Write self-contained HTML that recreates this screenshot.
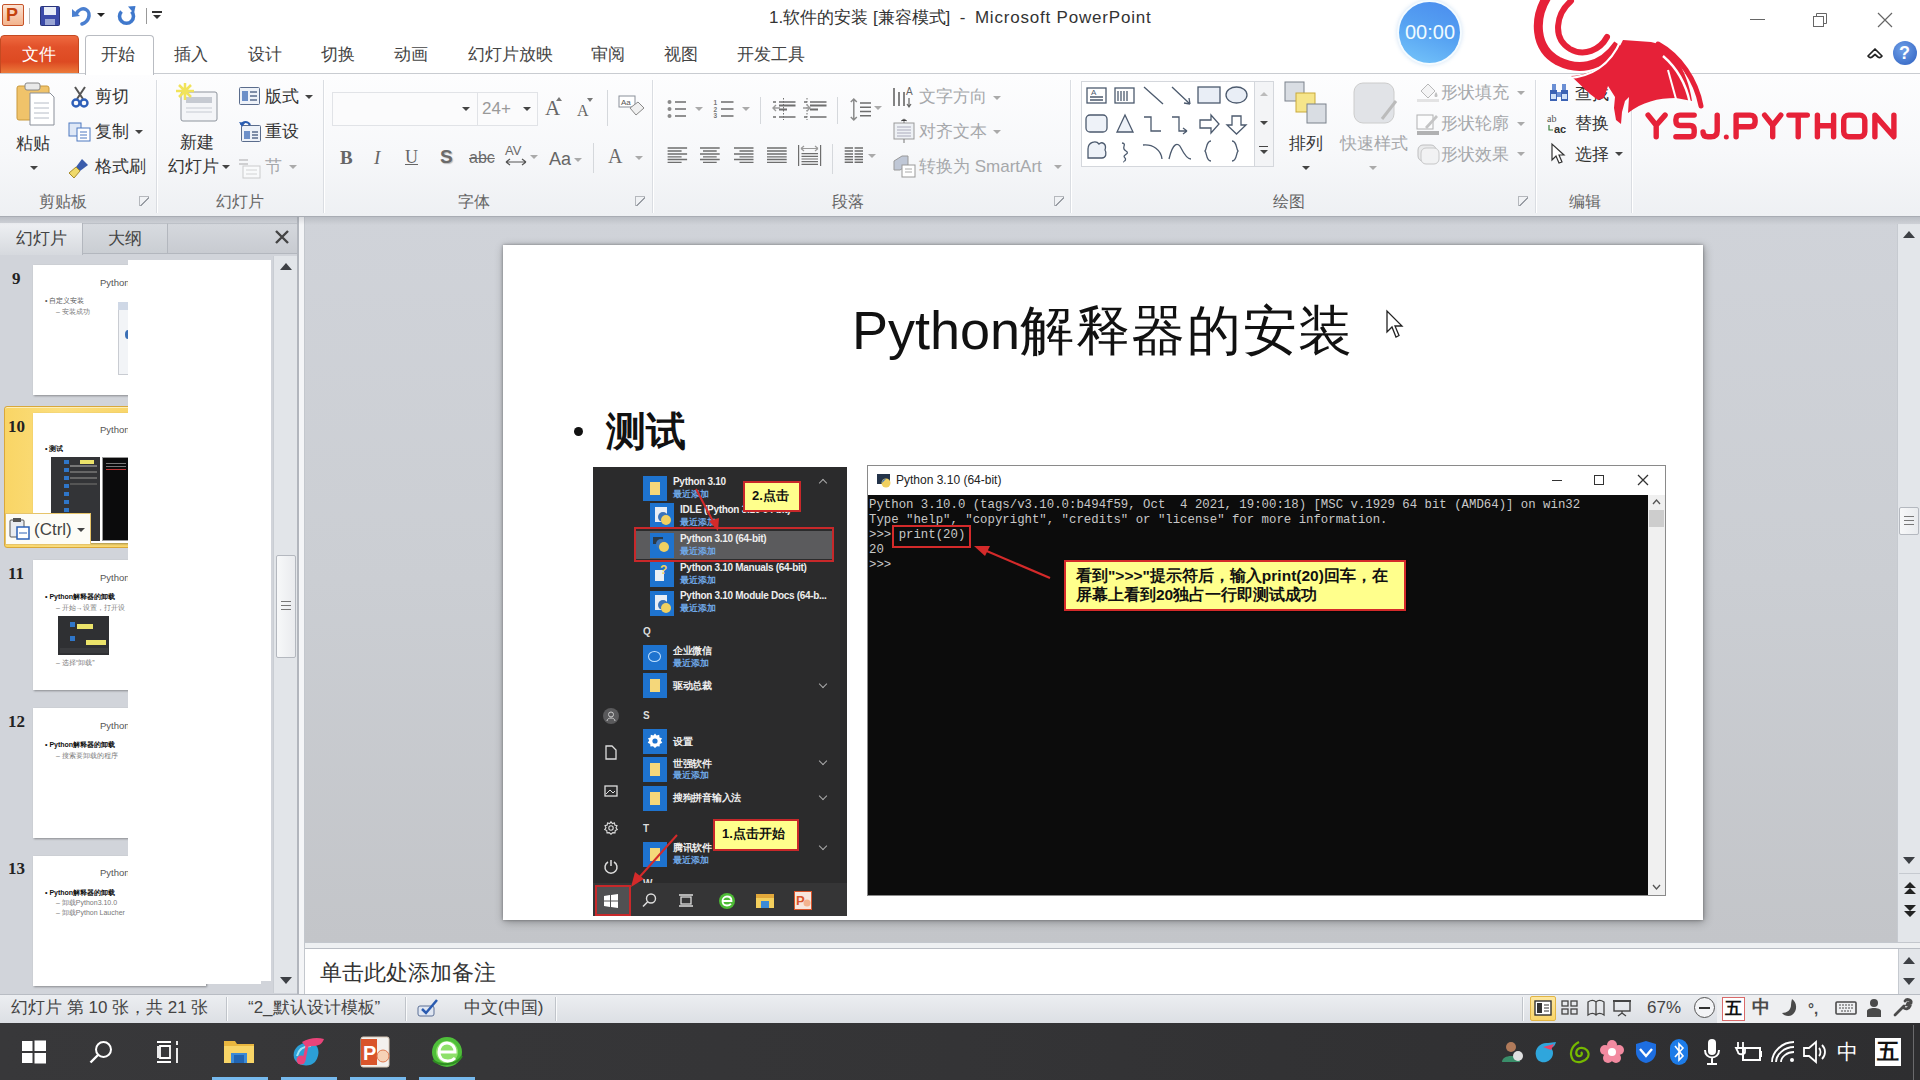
<!DOCTYPE html>
<html><head><meta charset="utf-8">
<style>
*{margin:0;padding:0;box-sizing:border-box}
html,body{width:1920px;height:1080px;overflow:hidden;background:#fff;font-family:"Liberation Sans",sans-serif;color:#333}
.a{position:absolute}
svg{position:absolute;overflow:visible}
#ribbon{left:0;top:73px;width:1920px;height:145px;background:linear-gradient(#fdfdfe,#f7f8fa 55%,#eef0f3);border-top:1px solid #c9ccd1;border-bottom:2px solid #a8acb3}
#leftpanel{left:0;top:217px;width:300px;height:777px;background:#d1d4da}
#main{left:305px;top:217px;width:1615px;height:726px;background:linear-gradient(#d0d3d9,#cbced3 50%,#c3c5c9)}
#status{left:0;top:994px;width:1920px;height:29px;background:linear-gradient(#eceef1,#dcdfe4);border-top:1px solid #b8bcc3}
#taskbar{left:0;top:1023px;width:1920px;height:57px;background:linear-gradient(90deg,#38383a,#343436 50%,#2e2e30)}
.t{position:absolute;white-space:nowrap;line-height:1}
.tab{top:46px;z-index:3;font-size:17px;color:#444}
.lbl{top:194px;font-size:16px;color:#666}
.rt{font-size:17px;color:#333}
.gr{color:#a6a8ab}
.sep{position:absolute;top:80px;width:2px;height:133px;background:linear-gradient(90deg,#dadde2 50%,#fff 50%)}
.dd{position:absolute;width:0;height:0;border-left:4px solid transparent;border-right:4px solid transparent;border-top:4px solid #444}
.ddg{border-top-color:#aaa}
.launch{position:absolute;width:10px;height:10px;border-left:1px solid #b5b8bd;border-top:1px solid #b5b8bd;background:linear-gradient(135deg,transparent 45%,#9a9ea5 45%,#9a9ea5 58%,transparent 58%)}
</style></head><body>
<!-- TITLE BAR -->
<div class="a" style="left:0;top:0;width:1920px;height:38px;background:#fff"></div>
<!-- P icon -->
<div class="a" style="left:2px;top:4px;width:22px;height:22px;border:1px solid #c6542a;background:linear-gradient(#fbe3d3,#f3b48e);border-radius:2px"></div>
<div class="t" style="left:6px;top:6px;font-size:18px;font-weight:bold;color:#c4420f">P</div>
<div class="a" style="left:29px;top:8px;width:1px;height:16px;background:#bbb"></div>
<!-- save -->
<svg style="left:40px;top:6px" width="20" height="20"><rect x="0.5" y="0.5" width="19" height="19" rx="1" fill="#3b4aa8" stroke="#29347a"/><rect x="4" y="1" width="12" height="8" fill="#e8ecf6"/><rect x="5" y="13" width="10" height="6" fill="#9aa5d4"/></svg>
<!-- undo -->
<svg style="left:70px;top:4px" width="22" height="24"><path d="M6 10 C9 5 13 4 16 5.5 C19 7 19.5 11 18.5 14 C17.5 17 15 19 12 20" fill="none" stroke="#4a7fd0" stroke-width="3.6" stroke-linecap="round"/><path d="M2 5 L10 12 L2 13 Z" fill="#4a7fd0"/></svg>
<div class="dd" style="left:97px;top:13px;border-top-color:#222;border-left-width:4.5px;border-right-width:4.5px"></div>
<!-- redo circular -->
<svg style="left:116px;top:5px" width="22" height="22"><path d="M5.5 6.4 A7 7 0 1 0 15.5 6.4" fill="none" stroke="#3f78cc" stroke-width="3.6"/><path d="M12 1.5 L19.5 1 L18 8.5 Z" fill="#3f78cc"/></svg>
<div class="a" style="left:146px;top:8px;width:1px;height:16px;background:#999"></div>
<div class="a" style="left:152px;top:11px;width:10px;height:2px;background:#333"></div>
<div class="dd" style="left:153px;top:15px;border-top-color:#333"></div>
<div class="t" style="left:769px;top:9px;font-size:17px;color:#333">1.软件的安装 [兼容模式] &nbsp;- &nbsp;<span style="letter-spacing:0.8px">Microsoft PowerPoint</span></div>
<!-- timer -->
<div class="a" style="left:1397px;top:0px;width:65px;height:65px;border-radius:50%;background:#f4fbff;box-shadow:0 0 4px rgba(150,190,230,.45)"></div>
<div class="a" style="left:1399px;top:2px;width:61px;height:61px;border-radius:50%;background:linear-gradient(200deg,#4a8cee,#56a2f2 50%,#76c6fa)"></div>
<div class="t" style="left:1405px;top:22px;font-size:20px;color:#f0fbff">00:00</div>
<!-- window controls -->
<div class="a" style="left:1750px;top:19px;width:15px;height:1px;background:#666"></div>
<svg style="left:1813px;top:12px" width="16" height="16"><rect x="0.5" y="4.5" width="10" height="10" fill="none" stroke="#666"/><path d="M3.5 4.5 V1.5 H13.5 V11.5 H10.5" fill="none" stroke="#666"/></svg>
<svg style="left:1877px;top:12px" width="16" height="16"><path d="M1 1 L15 15 M15 1 L1 15" stroke="#666" stroke-width="1.2"/></svg>

<!-- TABS -->
<div class="a" style="left:0;top:35px;width:79px;height:39px;background:linear-gradient(#ee6a40,#e2512a 30%,#dd4a22 70%,#ec7a3a);border:1px solid #c44a22;border-radius:4px 4px 0 0"></div>
<div class="t" style="left:22px;top:46px;font-size:17px;color:#fff">文件</div>
<div class="a" style="left:85px;top:35px;width:69px;height:40px;background:#fff;border:1px solid #b9bcc2;border-bottom:none;border-radius:4px 4px 0 0;z-index:2"></div>
<div class="t tab" style="left:101px">开始</div>
<div class="t tab" style="left:174px">插入</div>
<div class="t tab" style="left:248px">设计</div>
<div class="t tab" style="left:321px">切换</div>
<div class="t tab" style="left:394px">动画</div>
<div class="t tab" style="left:468px">幻灯片放映</div>
<div class="t tab" style="left:591px">审阅</div>
<div class="t tab" style="left:664px">视图</div>
<div class="t tab" style="left:737px">开发工具</div>
<svg style="left:1866px;top:46px" width="18" height="14"><path d="M2 10 L9 3 L16 10 Q14 12.5 12 11 L9 8.5 L6 11 Q4 12.5 2 10Z" fill="none" stroke="#222" stroke-width="1.7" stroke-linejoin="round"/></svg>
<div class="a" style="left:1893px;top:41px;width:24px;height:24px;border-radius:50%;background:radial-gradient(circle at 40% 35%,#6fa0e8,#2d5fbf)"></div>
<div class="t" style="left:1899px;top:44px;font-size:18px;font-weight:bold;color:#fff">?</div>

<!-- RIBBON -->
<div id="ribbon" class="a"></div>
<div class="sep" style="left:156px"></div>
<div class="sep" style="left:323px"></div>
<div class="sep" style="left:652px"></div>
<div class="sep" style="left:1070px"></div>
<div class="sep" style="left:1535px"></div>
<div class="sep" style="left:1631px"></div>
<div class="t lbl" style="left:39px">剪贴板</div>
<div class="t lbl" style="left:216px">幻灯片</div>
<div class="t lbl" style="left:458px">字体</div>
<div class="t lbl" style="left:832px">段落</div>
<div class="t lbl" style="left:1273px">绘图</div>
<div class="t lbl" style="left:1569px">编辑</div>
<div class="launch" style="left:139px;top:196px"></div>
<div class="launch" style="left:635px;top:196px"></div>
<div class="launch" style="left:1054px;top:196px"></div>
<div class="launch" style="left:1518px;top:196px"></div>
<!-- Clipboard -->
<svg style="left:16px;top:82px" width="40" height="44">
 <rect x="1" y="4" width="32" height="34" rx="2" fill="#f0c36a" stroke="#c9993d"/>
 <rect x="9" y="1" width="15" height="7" rx="2" fill="#e9e9e9" stroke="#888"/>
 <path d="M14 11 H34 L38 15 V43 H14 Z" fill="#fff" stroke="#8a8f99"/>
 <path d="M18 21H33M18 26H33M18 31H33M18 36H33" stroke="#b6bcc6"/>
</svg>
<div class="t rt" style="left:16px;top:135px">粘贴</div>
<div class="dd" style="left:30px;top:166px"></div>
<svg style="left:71px;top:86px" width="18" height="22"><path d="M4 1 L12 13 M14 1 L6 13" stroke="#555" stroke-width="2"/><circle cx="5" cy="17" r="3.5" fill="none" stroke="#2e5fb8" stroke-width="2.4"/><circle cx="13" cy="17" r="3.5" fill="none" stroke="#2e5fb8" stroke-width="2.4"/></svg>
<div class="t rt" style="left:95px;top:88px">剪切</div>
<svg style="left:68px;top:122px" width="24" height="20"><rect x="1" y="1" width="12" height="13" fill="#dfe8f6" stroke="#4d78c0"/><rect x="9" y="6" width="13" height="13" fill="#fff" stroke="#4d78c0"/><path d="M12 10H19M12 13H19M12 16H19" stroke="#4d78c0"/></svg>
<div class="t rt" style="left:95px;top:123px">复制</div>
<div class="dd" style="left:135px;top:130px"></div>
<svg style="left:68px;top:157px" width="22" height="22"><path d="M14 2 L20 8 L12 14 L8 10 Z" fill="#3a5cab"/><path d="M8 10 L12 14 L6 21 L1 16 Z" fill="#efd96a" stroke="#a68a2a"/></svg>
<div class="t rt" style="left:95px;top:158px">格式刷</div>
<!-- Slides -->
<svg style="left:176px;top:83px" width="46" height="40"><rect x="5" y="9" width="36" height="29" rx="2" fill="#f4f5f8" stroke="#8d939c"/><rect x="10" y="14" width="26" height="6" fill="#c6cad2"/><path d="M10 25H36M10 29H36" stroke="#c6cad2"/><path d="M9 0V17M0 8H18M3 2L15 14M15 2L3 14" stroke="#f1e35a" stroke-width="2.5"/></svg>
<div class="t rt" style="left:180px;top:134px">新建</div>
<div class="t rt" style="left:168px;top:158px">幻灯片</div>
<div class="dd" style="left:222px;top:165px"></div>
<svg style="left:239px;top:87px" width="21" height="18"><rect x="0.5" y="0.5" width="20" height="17" rx="1" fill="#eef2f8" stroke="#5a6c8c"/><rect x="3" y="4" width="6" height="10" fill="#6c8fc8"/><path d="M11 5H18M11 9H18M11 13H18" stroke="#5a6c8c" stroke-width="1.5"/></svg>
<div class="t rt" style="left:265px;top:88px">版式</div>
<div class="dd" style="left:305px;top:95px"></div>
<svg style="left:239px;top:120px" width="22" height="22"><rect x="2.5" y="5.5" width="19" height="16" rx="1" fill="#eef2f8" stroke="#5a6c8c"/><rect x="5" y="11" width="6" height="8" fill="#6c8fc8"/><path d="M13 12H19M13 15H19M13 18H19" stroke="#5a6c8c" stroke-width="1.4"/><path d="M2 5 C4 1 9 1 11 5" fill="none" stroke="#2a5db0" stroke-width="2.2"/><path d="M0 2 L3 7 L6 3Z" fill="#2a5db0"/></svg>
<div class="t rt" style="left:265px;top:123px">重设</div>
<svg style="left:238px;top:157px" width="24" height="22" opacity=".45"><path d="M1 3H10M1 7H10" stroke="#888" stroke-width="1.5"/><rect x="5" y="9" width="17" height="12" fill="#fff" stroke="#999"/><path d="M8 13H19M8 17H19" stroke="#aaa"/></svg>
<div class="t rt gr" style="left:265px;top:158px">节</div>
<div class="dd ddg" style="left:289px;top:165px"></div>
<!-- Font -->
<div class="a" style="left:332px;top:92px;width:146px;height:34px;background:#fbfbfc;border:1px solid #e1e3e7"></div>
<div class="dd" style="left:462px;top:107px"></div>
<div class="a" style="left:478px;top:92px;width:60px;height:34px;background:#fbfbfc;border:1px solid #e1e3e7;border-left:none"></div>
<div class="t gr" style="left:482px;top:100px;font-size:17px;color:#999">24+</div>
<div class="dd" style="left:523px;top:107px"></div>
<div class="t" style="left:545px;top:98px;font-size:21px;color:#666;font-family:'Liberation Serif',serif">A</div>
<div class="dd" style="left:556px;top:97px;border-top:none;border-bottom:4px solid #777;border-left-width:3px;border-right-width:3px"></div>
<div class="t" style="left:577px;top:103px;font-size:16px;color:#666;font-family:'Liberation Serif',serif">A</div>
<div class="dd" style="left:587px;top:98px;border-top-color:#777;border-left-width:3px;border-right-width:3px"></div>
<div class="a" style="left:607px;top:90px;width:1px;height:36px;background:#d5d8dc"></div>
<svg style="left:618px;top:95px" width="28" height="24"><rect x="1" y="1" width="16" height="11" fill="#fff" stroke="#8a8f99"/><text x="3" y="10" font-size="8" fill="#555" font-family="Liberation Sans">Aa</text><path d="M12 13 L20 7 L26 13 L18 20 Z" fill="#f0f0f0" stroke="#888"/></svg>
<div class="t" style="left:340px;top:148px;font-size:19px;font-weight:bold;color:#666;font-family:'Liberation Serif',serif">B</div>
<div class="t" style="left:374px;top:148px;font-size:19px;font-style:italic;color:#666;font-family:'Liberation Serif',serif">I</div>
<div class="t" style="left:405px;top:148px;font-size:18px;color:#666;font-family:'Liberation Serif',serif;text-decoration:underline">U</div>
<div class="t" style="left:440px;top:147px;font-size:19px;font-weight:bold;color:#6a6a6a;text-shadow:1px 1px 1px #bbb">S</div>
<div class="t" style="left:469px;top:150px;font-size:16px;color:#6a6a6a;text-decoration:line-through">abc</div>
<div class="t" style="left:505px;top:144px;font-size:13px;color:#6a6a6a">AV</div>
<svg style="left:505px;top:158px" width="22" height="8"><path d="M1 4H21M1 4L5 1M1 4L5 7M21 4L17 1M21 4L17 7" fill="none" stroke="#555" stroke-width="1.2"/></svg>
<div class="dd ddg" style="left:530px;top:155px"></div>
<div class="t" style="left:549px;top:150px;font-size:18px;color:#666">Aa</div>
<div class="dd ddg" style="left:574px;top:158px"></div>
<div class="a" style="left:593px;top:143px;width:1px;height:30px;background:#d5d8dc"></div>
<div class="t" style="left:608px;top:146px;font-size:20px;color:#6a6a6a;font-family:'Liberation Serif',serif">A</div>
<div class="dd ddg" style="left:635px;top:156px"></div>
<!-- Paragraph -->
<svg style="left:650px;top:80px" width="235" height="95"><g fill="none" stroke="#6e6e6e">
<g fill="#8a8a8a" stroke="none"><circle cx="19.5" cy="22" r="2"/><circle cx="19.5" cy="29" r="2"/><circle cx="19.5" cy="36" r="2"/></g>
<path d="M25 22H36M25 29H36M25 36H36" stroke-width="1.7"/>
<text x="63.5" y="25" font-size="6.5" fill="#777" stroke="none" font-family="Liberation Sans" font-weight="bold">1</text>
<text x="63.5" y="31.5" font-size="6.5" fill="#777" stroke="none" font-family="Liberation Sans" font-weight="bold">2</text>
<text x="63.5" y="38" font-size="6.5" fill="#777" stroke="none" font-family="Liberation Sans" font-weight="bold">3</text>
<path d="M71 22H83.5M71 29H83.5M71 36H83.5" stroke-width="1.7"/>
<path d="M123 22H126M129 22H145.5M123 37H126M129 37H145.5" stroke-width="1.5"/>
<path d="M129 25.5H145.5M129 29.5H137" stroke-width="2.2"/>
<path d="M133.5 18V40" stroke-width="1" stroke-dasharray="1.5 1.5"/>
<path d="M130 28H123M126 25L123 28L126 31" stroke="#9a9a9a" stroke-width="1.4"/>
<path d="M154 22H157M160 22H176.5M154 37H157M160 37H176.5" stroke-width="1.5"/>
<path d="M160 25.5H176.5M160 29.5H168" stroke-width="2.2"/>
<path d="M157 18V40" stroke-width="1" stroke-dasharray="1.5 1.5"/>
<path d="M153 28H160M157 25L160 28L157 31" stroke="#9a9a9a" stroke-width="1.4"/>
<path d="M203.8 19V40M200.8 22L203.8 19L206.8 22M200.8 37L203.8 40L206.8 37" stroke="#8a8a8a" stroke-width="1.5"/>
<path d="M210 23H221M210 27.2H221M210 31.5H221M210 35.8H221" stroke-width="1.5"/>
<path d="M17.6 68H37.1M17.6 71H31.6M17.6 74H37.1M17.6 76.8H31.6M17.6 79.5H37.1M17.6 82.3H31.6" stroke-width="1.3"/>
<path d="M50 68H69.7M53 71H66.7M50 74H69.7M53 76.8H66.7M50 79.5H69.7M53 82.3H66.7" stroke-width="1.3"/>
<path d="M84 68H103.5M89.5 71H103.5M84 74H103.5M89.5 76.8H103.5M84 79.5H103.5M89.5 82.3H103.5" stroke-width="1.3"/>
<path d="M117 68H136.7M117 71H136.7M117 74H136.7M117 76.8H136.7M117 79.5H136.7M117 82.3H136.7" stroke-width="1.3"/>
<path d="M148.6 65V86M170.6 65V86" stroke-width="1.2"/>
<path d="M151 68.5H168M151 68.5L154 66M151 68.5L154 71M168 68.5L165 66M168 68.5L165 71" stroke="#9a9a9a" stroke-width="1.2"/>
<path d="M151.5 73.6H168M151.5 76.3H168M151.5 79H168M151.5 81.7H168M151.5 84.4H168" stroke-width="1.2"/>
<path d="M194.7 68H203M194.7 71H203M194.7 74H203M194.7 76.8H203M194.7 79.5H203M194.7 82.3H203M204.6 68H213M204.6 71H213M204.6 74H213M204.6 76.8H213M204.6 79.5H213M204.6 82.3H213" stroke-width="1.4"/>
</g></svg>
<div class="dd ddg" style="left:695px;top:107px"></div>
<div class="dd ddg" style="left:742px;top:107px"></div>
<div class="dd ddg" style="left:874px;top:106px"></div>
<div class="dd ddg" style="left:868px;top:154px"></div>
<div class="a" style="left:760px;top:97px;width:1px;height:27px;background:#d5d8dc"></div>
<div class="a" style="left:837px;top:97px;width:1px;height:27px;background:#d5d8dc"></div>
<div class="a" style="left:832px;top:144px;width:1px;height:30px;background:#d5d8dc"></div>
<svg style="left:892px;top:84px" width="24" height="24"><path d="M2 4V22M7 8V22M12 8V22" stroke="#666" stroke-width="1.6"/><text x="14" y="11" font-size="10" fill="#666" font-family="Liberation Sans">A</text><path d="M17 14V22M15 20L17 23L19 20" fill="none" stroke="#666" stroke-width="1.2"/></svg>
<div class="t rt gr" style="left:919px;top:88px">文字方向</div>
<div class="dd ddg" style="left:993px;top:96px"></div>
<svg style="left:893px;top:119px" width="22" height="25"><rect x="1" y="4" width="20" height="16" fill="#eef1f5" stroke="#999"/><path d="M4 8H18M4 11H18M4 14H18M4 17H18" stroke="#aab"/><path d="M11 0V4M8 2L11 0L14 2M11 24V20" stroke="#777"/></svg>
<div class="t rt gr" style="left:919px;top:123px">对齐文本</div>
<div class="dd ddg" style="left:993px;top:130px"></div>
<svg style="left:893px;top:155px" width="24" height="24"><path d="M1 6L9 1H15V10L7 15H1Z" fill="#bfc7d6" stroke="#999"/><rect x="9" y="10" width="13" height="12" fill="#fff" stroke="#999"/><path d="M12 14H19M12 17H19" stroke="#aaa"/></svg>
<div class="t rt gr" style="left:919px;top:158px">转换为 SmartArt</div>
<div class="dd ddg" style="left:1054px;top:165px"></div>
<!-- Drawing -->
<div class="a" style="left:1081px;top:81px;width:193px;height:86px;background:#fff;border:1px solid #d4d7dc"></div>
<div class="a" style="left:1254px;top:81px;width:20px;height:86px;background:#f3f4f6;border:1px solid #d4d7dc"></div>
<div class="dd ddg" style="left:1260px;top:92px;border-top:none;border-bottom:4px solid #bbb"></div>
<div class="dd" style="left:1260px;top:121px"></div>
<div class="a" style="left:1259px;top:146px;width:9px;height:1px;background:#444"></div>
<div class="dd" style="left:1260px;top:150px"></div>
<svg style="left:1083px;top:82px" width="170" height="84" fill="none" stroke="#4c5a6e" stroke-width="1.3">
 <rect x="4" y="6" width="19" height="15" fill="#fff"/><path d="M7 15H20M7 18H20"/><text x="8" y="13" font-size="8" fill="#4c5a6e" stroke="none" font-family="Liberation Sans">A</text>
 <rect x="32" y="6" width="19" height="15" fill="#fff"/><path d="M35 9V19M38 9V19M41 9V19M44 9V19"/>
 <path d="M61 5L80 22"/><path d="M89 5L107 22M107 22L106 16M107 22L101 21"/>
 <rect x="115" y="5" width="22" height="16" fill="#e9eef6"/><ellipse cx="153.5" cy="13" rx="10.5" ry="8" fill="#e9eef6"/>
 <rect x="3" y="33" width="21" height="17" rx="4" fill="#eef2f8"/><path d="M42 33L34 50H50Z" fill="#eef2f8"/>
 <path d="M61 35H68V49H78"/><path d="M89 35H96V49H104M104 49L100 46M104 49L100 52"/>
 <path d="M117 38H128V33L136 42L128 51V46H117Z"/><path d="M149 34H158V43H163L153.5 52L144 43H149Z"/>
 <path d="M5 76 V67 C5 60 13 58 16 62 C19 59 24 62 22 68 C24 71 23 76 19 76 Z" fill="#eef2f8"/>
 <path d="M39 61 C45 62 37 66 43 69 C48 72 38 73 42 76 C44 78 40 80 41 80"/>
 <path d="M60 63 C70 62 78 68 79 77"/>
 <path d="M86 77 C90 60 95 60 98 66 C101 72 104 77 108 77"/>
 <path d="M128 59 C123 59 124 67 122 69 C124 71 123 79 128 79"/>
 <path d="M149 59 C154 59 153 67 155 69 C153 71 154 79 149 79"/>
</svg>
<svg style="left:1284px;top:81px" width="46" height="46"><rect x="1" y="1" width="19" height="19" fill="#d9dde3" stroke="#7b818b"/><rect x="12" y="12" width="19" height="19" fill="#f6e58a" stroke="#c9a93a"/><rect x="23" y="23" width="19" height="19" fill="#d9dde3" stroke="#7b818b"/></svg>
<div class="t rt" style="left:1289px;top:135px">排列</div>
<div class="dd" style="left:1302px;top:166px"></div>
<svg style="left:1352px;top:81px" width="48" height="46"><rect x="2" y="2" width="40" height="40" rx="9" fill="#e1e3e7" stroke="#ccc"/><path d="M30 38 L44 20" stroke="#bbb" stroke-width="3"/></svg>
<div class="t rt gr" style="left:1340px;top:135px">快速样式</div>
<div class="dd ddg" style="left:1369px;top:166px"></div>
<svg style="left:1416px;top:81px" width="24" height="22" opacity=".5"><path d="M5 10L12 3L19 10L12 17Z" fill="#eee" stroke="#777"/><path d="M20 11C22 14 22 16 20 16C18 16 18 14 20 11Z" fill="#888"/><rect x="1" y="18" width="22" height="3" fill="#ccc"/></svg>
<div class="t rt gr" style="left:1441px;top:84px">形状填充</div>
<div class="dd ddg" style="left:1517px;top:91px"></div>
<svg style="left:1416px;top:112px" width="24" height="24" opacity=".55"><rect x="1" y="3" width="16" height="14" fill="#fff" stroke="#777"/><path d="M9 15L20 3L22 5L11 17Z" fill="#999"/><rect x="1" y="19" width="22" height="4" fill="#777"/></svg>
<div class="t rt gr" style="left:1441px;top:115px">形状轮廓</div>
<div class="dd ddg" style="left:1517px;top:122px"></div>
<svg style="left:1416px;top:143px" width="24" height="22" opacity=".5"><rect x="2" y="2" width="18" height="16" rx="5" fill="#ddd" stroke="#888"/><rect x="5" y="5" width="18" height="16" rx="5" fill="#eee" stroke="#999"/></svg>
<div class="t rt gr" style="left:1441px;top:146px">形状效果</div>
<div class="dd ddg" style="left:1517px;top:152px"></div>
<!-- Editing -->
<svg style="left:1548px;top:82px" width="22" height="20"><path d="M2 8H9V19H2ZM13 8H20V19H13Z" fill="#3c63b4"/><path d="M4 2H8V8H4ZM14 2H18V8H14ZM9 10H13V15H9Z" fill="#6b8fd4"/><rect x="3" y="12" width="5" height="5" fill="#cfe0f8"/><rect x="14" y="12" width="5" height="5" fill="#cfe0f8"/></svg>
<div class="t rt" style="left:1575px;top:85px">查找</div>
<svg style="left:1547px;top:113px" width="26" height="22"><text x="0" y="9" font-size="10" fill="#555" font-family="Liberation Serif">ab</text><text x="7" y="20" font-size="11" fill="#333" font-weight="bold" font-family="Liberation Sans">ac</text><path d="M2 12V17H6" fill="none" stroke="#3a7d3a" stroke-width="1.2"/></svg>
<div class="t rt" style="left:1575px;top:115px">替换</div>
<svg style="left:1551px;top:143px" width="16" height="22"><path d="M1 1 L1 17 L5 13 L8 20 L11 19 L8 12 L13 12 Z" fill="#fff" stroke="#333" stroke-width="1.2"/></svg>
<div class="t rt" style="left:1575px;top:146px">选择</div>
<div class="dd" style="left:1615px;top:152px"></div>
<!-- Logo -->
<svg style="left:1530px;top:0px" width="180" height="130">
 <g fill="none" stroke-linecap="round">
  <path d="M17 -3 C4 18 4 48 28 61 C46 70 70 70 88 44" stroke="#e62138" stroke-width="9" stroke-linecap="butt"/>
  <path d="M41 1 C26 14 22 38 40 49 C54 57 70 50 77 37" stroke="#e62138" stroke-width="6"/>
 </g>
 <path fill="#e62138" d="M93 40 L121 42 C132 44 140 50 146 58 C154 70 160 86 162 101 L146 98 C128 98 112 102 98 113 L99 97 L95 101 L92 112 L91 124 L86 120 L84 108 L85 97 L78 86 L74 98 L68 100 L60 94 L41 76 C62 75 82 64 93 40 Z"/>
 <path d="M38 78 C60 77 80 66 91 40" fill="none" stroke="#fff" stroke-width="2.2"/>
 <path d="M128 44 C150 56 166 80 171 106" fill="none" stroke="#e62138" stroke-width="5" stroke-linecap="round"/>
 <path d="M133 56 C147 68 156 84 160 103" fill="none" stroke="#fff" stroke-width="2.4"/>
 <path d="M138 70 L146 99" fill="none" stroke="#fff" stroke-width="2"/>
 
</svg>
<svg style="left:1640px;top:105px" width="260" height="40"><g fill="none" stroke="#e62138" stroke-width="5.4" stroke-linecap="round" stroke-linejoin="round">
<path d="M8.1 10.1 L16.2 20.3 L25.1 10.1 M16.2 20.3 V31.8"/>
<path d="M54.2 10.1 H40 Q35.9 10.1 35.9 14.5 V16 Q35.9 20.5 40 20.5 H50 Q54.2 20.5 54.2 25 V27.5 Q54.2 31.8 50 31.8 H35.9"/>
<path d="M77.2 10.1 V26 Q77.2 31.8 71 31.8 H68 Q63 31.8 63 27"/>
<path d="M96.1 31.8 V10.1 H110 Q115.1 10.1 115.1 15 V17 Q115.1 21.7 110 21.7 H96.1"/>
<path d="M124.6 10.1 L132.7 20.3 L140.8 10.1 M132.7 20.3 V31.8"/>
<path d="M148.9 10.1 H167.3 M158.2 10.1 V31.8"/>
<path d="M177.4 10.1 V31.8 M193.6 10.1 V31.8 M177.4 20.8 H193.6"/>
<rect x="203.7" y="10.1" width="21.1" height="21.7" rx="5"/>
<path d="M234.9 31.8 V10.1 L253.9 31.8 V10.1"/>
</g><circle cx="86.3" cy="32.1" r="2.5" fill="#e62138"/></svg>



<!-- LEFT PANEL -->
<div id="leftpanel" class="a"></div>
<div class="a" style="left:0;top:223px;width:298px;height:31px;background:linear-gradient(#d5d8dd,#c8cbd1);border-bottom:1px solid #b3b7be;border-top:1px solid #c0c4ca"></div>
<div class="a" style="left:0;top:223px;width:83px;height:32px;background:linear-gradient(#eef0f3,#d6d9de);border-right:1px solid #b3b7be"></div>
<div class="a" style="left:83px;top:223px;width:85px;height:31px;border-right:1px solid #b3b7be;border-top:1px solid #c0c4ca;border-bottom:1px solid #b3b7be;background:linear-gradient(#d8dbe0,#caced3)"></div>
<div class="t" style="left:16px;top:230px;font-size:17px;color:#444">幻灯片</div>
<div class="t" style="left:108px;top:230px;font-size:17px;color:#444">大纲</div>
<svg style="left:274px;top:229px" width="16" height="16"><path d="M2 2L14 14M14 2L2 14" stroke="#444" stroke-width="2.4"/></svg>
<!-- splitter -->
<div class="a" style="left:297px;top:217px;width:2px;height:777px;background:#b2b6bd"></div>
<div class="a" style="left:299px;top:217px;width:6px;height:777px;background:#f4f5f7;border-right:1px solid #c3c7cd"></div>
<!-- scrollbar -->
<div class="a" style="left:273px;top:256px;width:24px;height:737px;background:#e2e5e9;border-left:1px solid #c9cdd3"></div>
<div class="dd" style="left:280px;top:263px;border-top:none;border-bottom:7px solid #3d4045;border-left-width:6px;border-right-width:6px"></div>
<div class="dd" style="left:280px;top:977px;border-top:7px solid #3d4045;border-left-width:6px;border-right-width:6px"></div>
<div class="a" style="left:276px;top:555px;width:20px;height:103px;background:linear-gradient(90deg,#f7f8f9,#e9ebee);border:1px solid #b4b8bf;border-radius:2px"></div>
<div class="a" style="left:281px;top:601px;width:10px;height:9px;border-top:1px solid #777;border-bottom:1px solid #777"></div>
<div class="a" style="left:281px;top:605px;width:10px;height:1px;background:#777"></div>
<!-- selected highlight -->
<div class="a" style="left:4px;top:406px;width:140px;height:142px;background:linear-gradient(90deg,#f9d565,#fbde7e 40%,#f8d467);border:1px solid #d9a83a;border-radius:3px;box-shadow:inset 0 1px 0 #fdeeb8"></div>
<!-- numbers -->
<div class="t" style="left:12px;top:270px;font-size:17px;font-weight:bold;color:#222;font-family:'Liberation Serif',serif">9</div>
<div class="t" style="left:8px;top:418px;font-size:17px;font-weight:bold;color:#222;font-family:'Liberation Serif',serif">10</div>
<div class="t" style="left:8px;top:565px;font-size:17px;font-weight:bold;color:#222;font-family:'Liberation Serif',serif">11</div>
<div class="t" style="left:8px;top:713px;font-size:17px;font-weight:bold;color:#222;font-family:'Liberation Serif',serif">12</div>
<div class="t" style="left:8px;top:860px;font-size:17px;font-weight:bold;color:#222;font-family:'Liberation Serif',serif">13</div>

<!-- thumbs -->
<div class="a" style="left:33px;top:265px;width:173px;height:130px;background:#fff;box-shadow:1px 1px 2px rgba(0,0,0,.35)"></div>
<div class="a" style="left:33px;top:413px;width:173px;height:130px;background:#fff;box-shadow:1px 1px 2px rgba(0,0,0,.35)"></div>
<div class="a" style="left:33px;top:560px;width:173px;height:130px;background:#fff;box-shadow:1px 1px 2px rgba(0,0,0,.35)"></div>
<div class="a" style="left:33px;top:708px;width:173px;height:130px;background:#fff;box-shadow:1px 1px 2px rgba(0,0,0,.35)"></div>
<div class="a" style="left:33px;top:856px;width:173px;height:130px;background:#fff;box-shadow:1px 1px 2px rgba(0,0,0,.35)"></div>
<div class="t" style="left:100px;top:278px;font-size:9.5px;color:#555">Python</div>
<div class="t" style="left:100px;top:425px;font-size:9.5px;color:#555">Python</div>
<div class="t" style="left:100px;top:573px;font-size:9.5px;color:#555">Python</div>
<div class="t" style="left:100px;top:721px;font-size:9.5px;color:#555">Python</div>
<div class="t" style="left:100px;top:868px;font-size:9.5px;color:#555">Python</div>
<!-- thumb 9 -->
<div class="t" style="left:45px;top:297px;font-size:7px;color:#555">• 自定义安装</div>
<div class="t" style="left:56px;top:308px;font-size:7px;color:#777">– 安装成功</div>
<div class="a" style="left:118px;top:302px;width:12px;height:73px;background:#f2f4f7;border:1px solid #c9ccd2"></div>
<div class="a" style="left:118px;top:302px;width:12px;height:8px;background:#cfd8e6"></div>
<div class="a" style="left:125px;top:330px;width:6px;height:9px;border-radius:50%;background:#3a6fb5"></div>
<!-- thumb 10 -->
<div class="t" style="left:45px;top:445px;font-size:7px;color:#111;font-weight:bold">• 测试</div>
<div class="a" style="left:51px;top:457px;width:49px;height:84px;background:#333437"></div>
<div class="a" style="left:64px;top:460px;width:5px;height:75px;background:repeating-linear-gradient(#2f76c9 0 4px,transparent 4px 8px)"></div>
<div class="a" style="left:80px;top:460px;width:14px;height:4px;background:#ebe36a"></div>
<div class="a" style="left:70px;top:465px;width:27px;height:2px;background:#777;box-shadow:0 6px 0 #666,0 12px 0 #666,0 18px 0 #555"></div>
<div class="a" style="left:102px;top:457px;width:26px;height:84px;background:#0b0b0c;border:1px solid #999;border-right:none"></div>
<div class="a" style="left:106px;top:463px;width:20px;height:1px;background:#777;box-shadow:0 3px 0 #777,0 6px 0 #b33"></div>
<!-- paste options -->
<div class="a" style="left:5px;top:513px;width:86px;height:32px;background:#fdfcf6;border:1px solid #e6c46a"></div>
<svg style="left:9px;top:518px" width="22" height="22"><rect x="1" y="2" width="14" height="17" rx="1" fill="#e9ecf1" stroke="#555"/><rect x="4" y="0" width="8" height="4" fill="#555"/><rect x="8" y="9" width="12" height="12" fill="#fff" stroke="#2d62b8" stroke-width="1.5"/><path d="M10 15H18" stroke="#2d62b8"/></svg>
<div class="t" style="left:34px;top:521px;font-size:17px;color:#444">(Ctrl)</div>
<div class="dd" style="left:77px;top:528px"></div>
<!-- thumb 11 -->
<div class="t" style="left:45px;top:593px;font-size:7px;color:#111;font-weight:bold">• Python解释器的卸载</div>
<div class="t" style="left:56px;top:604px;font-size:7px;color:#777">– 开始→设置，打开设</div>
<div class="a" style="left:58px;top:616px;width:51px;height:39px;background:#2f3033"></div>
<div class="a" style="left:77px;top:624px;width:16px;height:5px;background:#ebe36a"></div>
<div class="a" style="left:86px;top:640px;width:20px;height:5px;background:#ebe36a"></div>
<div class="a" style="left:70px;top:622px;width:5px;height:5px;background:#2f76c9;box-shadow:0 14px 0 #2f76c9"></div>
<div class="a" style="left:60px;top:648px;width:48px;height:5px;background:#3a3b3e"></div>
<div class="t" style="left:56px;top:659px;font-size:7px;color:#777">– 选择“卸载”</div>
<!-- thumb 12 -->
<div class="t" style="left:45px;top:741px;font-size:7px;color:#111;font-weight:bold">• Python解释器的卸载</div>
<div class="t" style="left:56px;top:752px;font-size:7px;color:#777">– 搜索要卸载的程序</div>
<!-- thumb 13 -->
<div class="t" style="left:45px;top:889px;font-size:7px;color:#111;font-weight:bold">• Python解释器的卸载</div>
<div class="t" style="left:56px;top:899px;font-size:7px;color:#777">– 卸载Python3.10.0</div>
<div class="t" style="left:56px;top:909px;font-size:7px;color:#777">– 卸载Python Laucher</div>
<!-- white glitch overlay -->
<div class="a" style="left:128px;top:260px;width:143px;height:721px;background:#fff"></div>
<div class="a" style="left:128px;top:975px;width:133px;height:9px;background:#fff"></div>


<!-- MAIN -->
<div id="main" class="a"></div>
<!-- right scrollbar -->
<div class="a" style="left:1897px;top:224px;width:23px;height:719px;background:#e3e6ea;border-left:1px solid #c6cad0"></div>
<div class="dd" style="left:1903px;top:231px;border-top:none;border-bottom:7px solid #3d4045;border-left-width:6px;border-right-width:6px"></div>
<div class="a" style="left:1899px;top:507px;width:20px;height:28px;background:linear-gradient(90deg,#f7f8f9,#e9ebee);border:1px solid #b4b8bf;border-radius:2px"></div>
<div class="a" style="left:1904px;top:516px;width:10px;height:9px;border-top:1px solid #777;border-bottom:1px solid #777"></div>
<div class="a" style="left:1904px;top:520px;width:10px;height:1px;background:#777"></div>
<div class="dd" style="left:1903px;top:857px;border-top:7px solid #3d4045;border-left-width:6px;border-right-width:6px"></div>
<div class="a" style="left:1899px;top:873px;width:21px;height:1px;background:#c6cad0"></div>
<svg style="left:1902px;top:880px" width="16" height="40"><path d="M2 8L8 2L14 8ZM2 14L8 8L14 14Z" fill="#222"/><path d="M2 25L8 31L14 25ZM2 31L8 37L14 31Z" fill="#222"/></svg>
<!-- splitter bottom -->
<div class="a" style="left:305px;top:942px;width:1615px;height:7px;background:#eef0f2;border-top:1px solid #c3c7cd;border-bottom:1px solid #b9bdc4"></div>
<!-- notes -->
<div class="a" style="left:305px;top:949px;width:1593px;height:45px;background:#fff"></div>
<div class="t" style="left:320px;top:962px;font-size:22px;color:#333">单击此处添加备注</div>
<div class="a" style="left:1898px;top:949px;width:22px;height:45px;background:#e3e6ea;border-left:1px solid #c6cad0"></div>
<div class="dd" style="left:1903px;top:957px;border-top:none;border-bottom:7px solid #3d4045;border-left-width:6px;border-right-width:6px"></div>
<div class="dd" style="left:1903px;top:978px;border-top:7px solid #3d4045;border-left-width:6px;border-right-width:6px"></div>
<!-- slide -->
<div class="a" style="left:503px;top:245px;width:1200px;height:675px;background:#fff;box-shadow:0 0 3px rgba(0,0,0,.35),1px 2px 9px rgba(0,0,0,.3)"></div>
<div class="t" style="left:852px;top:303px;font-size:54px;color:#111">Python<span style="letter-spacing:1.6px">解释器的安装</span></div>
<svg style="left:1386px;top:310px" width="20" height="30"><path d="M1 1 L1 22 L6 17 L10 27 L13 25.5 L9 16 L16 16 Z" fill="#fff" stroke="#222" stroke-width="1.3"/></svg>
<div class="a" style="left:574px;top:427px;width:9px;height:9px;border-radius:50%;background:#111"></div>
<div class="t" style="left:606px;top:412px;font-size:40px;font-weight:bold;color:#111;font-family:'Liberation Serif',serif">测试</div>
<div class="a" style="left:593px;top:467px;width:254px;height:449px;background:#2b2b2c;overflow:hidden">
 <style>
 .sm{position:absolute;white-space:nowrap;line-height:1;font-size:10px;color:#eee;font-weight:bold;letter-spacing:-0.3px}
 .sb{position:absolute;white-space:nowrap;line-height:1;font-size:9px;color:#6fa8e8;font-weight:bold}
 .tile{position:absolute;width:24px;height:25px;background:#1e73cf}
 .fold{position:absolute;width:10px;height:13px;background:#f5d77a}
 .chev{position:absolute;width:6px;height:6px;border-right:1.3px solid #aaa;border-bottom:1.3px solid #aaa;transform:rotate(45deg)}
 .ltr{position:absolute;font-size:10px;color:#ddd;font-weight:bold;line-height:1}
 </style>
 <!-- left column icons -->
 <div class="a" style="left:10px;top:241px;width:16px;height:16px;border-radius:50%;background:#5a5a5c"></div>
 <svg style="left:12px;top:243px" width="12" height="12"><circle cx="6" cy="4.5" r="2.5" fill="none" stroke="#ccc"/><path d="M2 11 C2 7 10 7 10 11" fill="none" stroke="#ccc"/></svg>
 <svg style="left:12px;top:278px" width="12" height="15"><path d="M1 1H7L11 5V14H1Z" fill="none" stroke="#ddd" stroke-width="1.3"/></svg>
 <svg style="left:11px;top:318px" width="14" height="12"><rect x="1" y="1" width="12" height="10" fill="none" stroke="#ddd" stroke-width="1.3"/><path d="M2 9L6 5L9 8L11 6" fill="none" stroke="#ddd"/></svg>
 <svg style="left:11px;top:354px" width="14" height="14"><path d="M7 0.8 L8.3 2.6 L10.5 1.9 L10.8 4.1 L13 4.7 L12 6.8 L13.3 8.6 L11.2 9.6 L11 11.9 L8.8 11.6 L7 13.2 L5.2 11.6 L3 11.9 L2.8 9.6 L0.7 8.6 L2 6.8 L1 4.7 L3.2 4.1 L3.5 1.9 L5.7 2.6 Z" fill="none" stroke="#ddd" stroke-width="1.1"/><circle cx="7" cy="7" r="2.2" fill="none" stroke="#ddd" stroke-width="1.1"/></svg>
 <svg style="left:11px;top:392px" width="14" height="14"><path d="M4 3A6 6 0 1 0 10 3M7 1V7" fill="none" stroke="#ddd" stroke-width="1.5"/></svg>
 <!-- Python 3.10 folder -->
 <div class="tile" style="left:50px;top:9px"></div><div class="fold" style="left:57px;top:15px"></div>
 <div class="sm" style="left:80px;top:10px">Python 3.10</div>
 <div class="sb" style="left:80px;top:23px">最近添加</div>
 <div class="chev" style="left:227px;top:13px;transform:rotate(225deg)"></div>
 <!-- IDLE -->
 <div class="tile" style="left:57px;top:36px"></div>
 <div class="a" style="left:62px;top:40px;width:12px;height:15px;background:#e9eef5"></div><div class="a" style="left:68px;top:48px;width:10px;height:10px;border-radius:50%;background:#f0d060;box-shadow:-3px -3px 0 #3b74b9"></div>
 <div class="sm" style="left:87px;top:38px">IDLE (Python 3.10 64-bit)</div>
 <div class="sb" style="left:87px;top:51px">最近添加</div>
 <!-- selected -->
 <div class="a" style="left:42px;top:64px;width:198px;height:28px;background:#5b5b5d"></div>
 <div class="a" style="left:41px;top:60px;width:200px;height:35px;border:2px solid #c8282a"></div>
 <div class="tile" style="left:57px;top:66px"></div>
 <div class="a" style="left:60px;top:70px;width:10px;height:7px;background:#2b3a48"></div><div class="a" style="left:66px;top:75px;width:10px;height:10px;border-radius:50%;background:#f0d060;box-shadow:-3px -3px 0 #3b74b9"></div>
 <div class="sm" style="left:87px;top:67px">Python 3.10 (64-bit)</div>
 <div class="sb" style="left:87px;top:80px">最近添加</div>
 <!-- manuals -->
 <div class="tile" style="left:57px;top:95px"></div>
 <div class="a" style="left:62px;top:103px;width:9px;height:11px;background:#e9eef5"></div><div class="t" style="left:67px;top:97px;font-size:12px;font-weight:bold;color:#f0d060">?</div>
 <div class="sm" style="left:87px;top:96px">Python 3.10 Manuals (64-bit)</div>
 <div class="sb" style="left:87px;top:109px">最近添加</div>
 <!-- module docs -->
 <div class="tile" style="left:57px;top:124px"></div>
 <div class="a" style="left:62px;top:128px;width:12px;height:15px;background:#e9eef5"></div><div class="a" style="left:68px;top:136px;width:10px;height:10px;border-radius:50%;background:#f0d060;box-shadow:-3px -3px 0 #3b74b9"></div>
 <div class="sm" style="left:87px;top:124px">Python 3.10 Module Docs (64-b...</div>
 <div class="sb" style="left:87px;top:137px">最近添加</div>
 <div class="ltr" style="left:50px;top:160px">Q</div>
 <div class="tile" style="left:50px;top:178px"></div>
 <div class="a" style="left:55px;top:184px;width:13px;height:11px;border-radius:50%;border:1.5px solid #bfe0ff"></div>
 <div class="sm" style="left:80px;top:179px">企业微信</div>
 <div class="sb" style="left:80px;top:192px">最近添加</div>
 <div class="tile" style="left:50px;top:206px"></div><div class="fold" style="left:57px;top:212px"></div>
 <div class="sm" style="left:80px;top:214px">驱动总裁</div>
 <div class="chev" style="left:227px;top:214px"></div>
 <div class="ltr" style="left:50px;top:244px">S</div>
 <div class="tile" style="left:50px;top:262px"></div>
 <svg style="left:54px;top:266px" width="16" height="16"><path d="M8 0.5 L9.6 2.6 L12.2 1.8 L12.5 4.4 L15 5.2 L13.8 7.6 L15.3 9.8 L12.8 10.9 L12.6 13.6 L10 13.2 L8 15 L6 13.2 L3.4 13.6 L3.2 10.9 L0.7 9.8 L2.2 7.6 L1 5.2 L3.5 4.4 L3.8 1.8 L6.4 2.6 Z" fill="#fff"/><circle cx="8" cy="8" r="2.6" fill="#1e73cf"/></svg>
 <div class="sm" style="left:80px;top:270px">设置</div>
 <div class="tile" style="left:50px;top:290px"></div><div class="fold" style="left:57px;top:296px"></div>
 <div class="sm" style="left:80px;top:292px">世强软件</div>
 <div class="sb" style="left:80px;top:304px">最近添加</div>
 <div class="chev" style="left:227px;top:291px"></div>
 <div class="tile" style="left:50px;top:319px"></div><div class="fold" style="left:57px;top:325px"></div>
 <div class="sm" style="left:80px;top:326px">搜狗拼音输入法</div>
 <div class="chev" style="left:227px;top:326px"></div>
 <div class="ltr" style="left:50px;top:357px">T</div>
 <div class="tile" style="left:50px;top:375px"></div><div class="fold" style="left:57px;top:381px"></div>
 <div class="sm" style="left:80px;top:376px">腾讯软件</div>
 <div class="sb" style="left:80px;top:389px">最近添加</div>
 <div class="chev" style="left:227px;top:376px"></div>
 <div class="ltr" style="left:50px;top:412px">W</div>
 <!-- callouts -->
 <div class="a" style="left:150px;top:14px;width:58px;height:31px;background:#ffff8c;border:2px solid #c8282a"></div>
 <div class="t" style="left:159px;top:22px;font-size:13px;font-weight:bold;color:#111">2.点击</div>
 <svg style="left:100px;top:20px" width="30" height="45"><path d="M3 2 L22 38" stroke="#d42a2a" stroke-width="2"/><path d="M16 34 L25 44 L26 31Z" fill="#d42a2a"/></svg>
 <div class="a" style="left:120px;top:352px;width:86px;height:32px;background:#ffff8c;border:2px solid #c8282a"></div>
 <div class="t" style="left:129px;top:360px;font-size:13px;font-weight:bold;color:#111">1.点击开始</div>
 <!-- mini taskbar -->
 <div class="a" style="left:0;top:416px;width:254px;height:33px;background:#353536"></div>
 <div class="a" style="left:2px;top:418px;width:36px;height:31px;background:#505052;border:2px solid #c8282a"></div>
 <svg style="left:11px;top:427px" width="14" height="14"><path d="M0 2L6 1V6.5H0ZM7 1L14 0V6.5H7ZM0 7.5H6V13L0 12ZM7 7.5H14V14L7 13Z" fill="#fff"/></svg>
 <svg style="left:49px;top:426px" width="14" height="14"><circle cx="9" cy="5.5" r="4.5" fill="none" stroke="#ddd" stroke-width="1.4"/><path d="M5.5 9L1 13.5" stroke="#ddd" stroke-width="1.6"/></svg>
 <svg style="left:86px;top:427px" width="14" height="13"><rect x="2" y="3" width="10" height="7" fill="none" stroke="#ddd" stroke-width="1.3"/><path d="M0 1H14M0 12H14" stroke="#ddd" stroke-width="1.3"/></svg>
 <svg style="left:125px;top:425px" width="18" height="18"><circle cx="9" cy="9" r="8" fill="#4dbb35"/><path d="M4.5 9 H13.5 C13.5 6 11.5 4.5 9 4.5 C6.5 4.5 4.5 6.5 4.5 9 C4.5 11.8 6.5 13.5 9 13.5 C10.8 13.5 12 12.8 13 11.8" fill="none" stroke="#fff" stroke-width="1.8"/></svg>
 <div class="a" style="left:163px;top:427px;width:18px;height:14px;background:#f3cf5d;border-top:4px solid #e2a83a"></div>
 <div class="a" style="left:168px;top:434px;width:8px;height:7px;background:#3b8ad7"></div>
 <svg style="left:201px;top:424px" width="19" height="19"><rect x="0.5" y="0.5" width="17" height="18" fill="#f7e6dc" stroke="#d9552b"/><text x="2" y="14" font-size="13" font-weight="bold" fill="#d9552b" font-family="Liberation Sans">P</text><circle cx="13" cy="12" r="3.5" fill="#f3b38e"/></svg>
 <svg style="left:0;top:0" width="254" height="449"><path d="M84 368 L43 414" stroke="#d42a2a" stroke-width="2"/><path d="M38 420 L42 405 L51 412Z" fill="#d42a2a"/></svg>
</div>

<div class="a" style="left:867px;top:465px;width:799px;height:431px;background:#fff;border:1px solid #8a8a8a"></div>
<svg style="left:877px;top:473px" width="15" height="15"><rect x="0" y="1" width="13" height="10" fill="#24344a"/><circle cx="9" cy="10" r="4.5" fill="#f0d060"/><path d="M5 10 a4 4 0 0 1 4 -4" fill="#3b74b9"/></svg>
<div class="t" style="left:896px;top:474px;font-size:12px;color:#222">Python 3.10 (64-bit)</div>
<div class="a" style="left:1552px;top:480px;width:10px;height:1px;background:#333"></div>
<div class="a" style="left:1594px;top:475px;width:10px;height:10px;border:1.2px solid #333"></div>
<svg style="left:1637px;top:474px" width="12" height="12"><path d="M1 1L11 11M11 1L1 11" stroke="#333" stroke-width="1.3"/></svg>
<div class="a" style="left:868px;top:495px;width:780px;height:400px;background:#0c0c0c"></div>
<div class="a" style="left:1648px;top:495px;width:17px;height:400px;background:#f0f0f0"></div>
<div class="a" style="left:1649px;top:510px;width:15px;height:17px;background:#cdcdcd"></div>
<svg style="left:1652px;top:499px" width="9" height="6"><path d="M1 5L4.5 1L8 5" fill="none" stroke="#555" stroke-width="1.3"/></svg>
<svg style="left:1652px;top:884px" width="9" height="6"><path d="M1 1L4.5 5L8 1" fill="none" stroke="#555" stroke-width="1.3"/></svg>
<pre class="a" style="left:869px;top:498px;font-family:'Liberation Mono',monospace;font-size:12.35px;line-height:15px;color:#c8c8c8;margin:0">Python 3.10.0 (tags/v3.10.0:b494f59, Oct  4 2021, 19:00:18) [MSC v.1929 64 bit (AMD64)] on win32
Type "help", "copyright", "credits" or "license" for more information.
>>> print(20)
20
>>></pre>
<div class="a" style="left:892px;top:525px;width:79px;height:23px;border:2px solid #d42a2a"></div>
<svg style="left:970px;top:540px" width="90" height="45"><path d="M80 38 L12 9" stroke="#d42a2a" stroke-width="2.2"/><path d="M4 6 L20 6 L15 16Z" fill="#d42a2a"/></svg>
<div class="a" style="left:1064px;top:560px;width:342px;height:51px;background:#ffff8c;border:2px solid #d42a2a;box-shadow:1px 1px 2px rgba(0,0,0,.4)"></div>
<div class="t" style="left:1076px;top:567px;font-size:15.5px;line-height:18.5px;font-weight:bold;color:#111">看到"&gt;&gt;&gt;"提示符后，输入print(20)回车，在<br>屏幕上看到20独占一行即测试成功</div>



<div class="a" style="left:0;top:217px;width:1920px;height:8px;background:linear-gradient(rgba(90,95,105,.18),rgba(90,95,105,0))"></div>
<!-- STATUS -->
<div id="status" class="a"></div>
<div class="t" style="left:11px;top:999px;font-size:17px;color:#444">幻灯片 第 10 张，共 21 张</div>
<div class="a" style="left:226px;top:997px;width:2px;height:24px;background:linear-gradient(90deg,#c0c4ca 50%,#fafbfc 50%)"></div>
<div class="t" style="left:248px;top:999px;font-size:17px;color:#444">“2_默认设计模板”</div>
<div class="a" style="left:405px;top:997px;width:2px;height:24px;background:linear-gradient(90deg,#c0c4ca 50%,#fafbfc 50%)"></div>
<svg style="left:417px;top:998px" width="24" height="20"><rect x="1" y="8" width="16" height="10" rx="2" fill="#dfe6f2" stroke="#5b6f95"/><path d="M5 11 L9 15 L20 2" fill="none" stroke="#2a5bb0" stroke-width="2.5"/></svg>
<div class="t" style="left:464px;top:999px;font-size:17px;color:#444">中文(中国)</div>
<div class="a" style="left:555px;top:997px;width:2px;height:24px;background:linear-gradient(90deg,#c0c4ca 50%,#fafbfc 50%)"></div>
<div class="a" style="left:1522px;top:997px;width:2px;height:24px;background:linear-gradient(90deg,#c0c4ca 50%,#fafbfc 50%)"></div>
<div class="a" style="left:1530px;top:996px;width:26px;height:25px;background:linear-gradient(#fde7a0,#f9d56a);border:1px solid #e2b544;border-radius:2px"></div>
<svg style="left:1534px;top:1000px" width="18" height="16"><rect x="1" y="1" width="16" height="14" fill="#fff" stroke="#333" stroke-width="1.4"/><rect x="3" y="3" width="5" height="10" fill="#333"/><path d="M10 5H15M10 8H15M10 11H15" stroke="#333"/></svg>
<svg style="left:1561px;top:1000px" width="18" height="16"><rect x="1" y="1" width="6" height="5" fill="none" stroke="#444" stroke-width="1.3"/><rect x="10" y="1" width="6" height="5" fill="none" stroke="#444" stroke-width="1.3"/><rect x="1" y="9" width="6" height="5" fill="none" stroke="#444" stroke-width="1.3"/><rect x="10" y="9" width="6" height="5" fill="none" stroke="#444" stroke-width="1.3"/></svg>
<svg style="left:1587px;top:999px" width="18" height="18"><path d="M1 3 C4 1 7 1 9 3 C11 1 14 1 17 3 V16 C14 14 11 14 9 16 C7 14 4 14 1 16 Z M9 3V16" fill="none" stroke="#444" stroke-width="1.3"/></svg>
<svg style="left:1613px;top:999px" width="18" height="18"><rect x="1" y="2" width="16" height="10" fill="none" stroke="#444" stroke-width="1.4"/><path d="M9 12V15M5 17L9 14L13 17" fill="none" stroke="#444" stroke-width="1.4"/><path d="M0 2H18" stroke="#444" stroke-width="2"/></svg>
<div class="t" style="left:1647px;top:999px;font-size:17px;color:#444">67%</div>
<div class="a" style="left:1694px;top:997px;width:21px;height:21px;border-radius:50%;border:1.5px solid #555;background:#f3f4f6"></div>
<div class="a" style="left:1699px;top:1007px;width:11px;height:2px;background:#333"></div>
<!-- IME bar overlay -->
<div class="a" style="left:1717px;top:995px;width:203px;height:28px;background:#eeeff1"></div>
<div class="a" style="left:1722px;top:997px;width:23px;height:24px;border:1.5px solid #d96a6a;background:#fff"></div>
<div class="t" style="left:1725px;top:1000px;font-size:17px;color:#111;font-weight:bold">五</div>
<div class="t" style="left:1752px;top:998px;font-size:18px;color:#4a4a4a;font-weight:bold">中</div>
<svg style="left:1781px;top:998px" width="18" height="20"><path d="M11 1 C16 4 17 13 11 17 C8 19 3 18 1 15 C6 15 10 12 10 7 C10 5 10.5 3 11 1Z" fill="#4a4a4a"/></svg>
<div class="t" style="left:1808px;top:1001px;font-size:15px;color:#4a4a4a;font-weight:bold">°,</div>
<svg style="left:1835px;top:1000px" width="22" height="16"><rect x="1" y="2" width="20" height="12" rx="1" fill="none" stroke="#4a4a4a" stroke-width="1.6"/><path d="M4 5H18M4 8H18M6 11H16" stroke="#4a4a4a" stroke-dasharray="2 1"/></svg>
<svg style="left:1865px;top:998px" width="18" height="20"><circle cx="9" cy="5" r="4" fill="#4a4a4a"/><path d="M2 19 V13 C2 9 16 9 16 13 V19Z" fill="#4a4a4a"/></svg>
<svg style="left:1893px;top:998px" width="20" height="20"><path d="M2 17 L11 8 M12 3 C14 0 19 2 18 5 L15 5 L14 7 L17 8 C16 11 12 12 10 9" fill="none" stroke="#4a4a4a" stroke-width="2.8" stroke-linecap="round"/></svg>


<!-- TASKBAR -->
<div id="taskbar" class="a"></div>
<svg style="left:22px;top:1040px" width="24" height="24"><path d="M0 1H10.5V11H0ZM12.5 0.5H24V11H12.5ZM0 13H10.5V23H0ZM12.5 13H24V23.5H12.5Z" fill="#fff"/></svg>
<svg style="left:89px;top:1040px" width="24" height="24"><circle cx="14.5" cy="9.5" r="7.5" fill="none" stroke="#fff" stroke-width="2"/><path d="M9 15L1.5 22.5" stroke="#fff" stroke-width="2.4"/></svg>
<svg style="left:156px;top:1040px" width="24" height="24"><path d="M1 2H15M1 22H15M2 6V18M4 6H14V18H4Z" fill="none" stroke="#fff" stroke-width="1.8"/><path d="M21 1V5M21 8V23" stroke="#fff" stroke-width="1.8"/></svg>
<svg style="left:223px;top:1037px" width="32" height="28"><path d="M1 4H12L14 7H31V26H1Z" fill="#e9b73f"/><path d="M1 9H31V26H1Z" fill="#f8d567"/><rect x="8" y="16" width="16" height="10" fill="#3b8ad7"/><rect x="11" y="18" width="10" height="8" fill="#2165b3"/></svg>
<svg style="left:291px;top:1036px" width="35" height="32"><path d="M3 22 C1 14 7 8 14 7 L20 7 C28 8 30 18 24 26 C18 32 6 30 3 22Z" fill="#2c9fd6"/><path d="M6 20 C8 12 14 10 20 10" fill="none" stroke="#9fe3f5" stroke-width="2"/><path d="M11 6 C18 2 26 1 33 3 C31 8 28 10 22 10 L15 11Z" fill="#e9447a"/><path d="M16 10 L13 24" stroke="#e9447a" stroke-width="3"/><circle cx="10" cy="24" r="4.5" fill="#e9447a"/></svg>
<svg style="left:360px;top:1036px" width="33" height="33"><rect x="1" y="1" width="28" height="30" rx="2" fill="#f3f1ee" stroke="#d9c9b8"/><path d="M1 3 H17 V29 H1Z" fill="#d9552b"/><text x="3" y="24" font-size="20" font-weight="bold" fill="#fff" font-family="Liberation Sans">P</text><circle cx="23" cy="20" r="6" fill="#f6d2b6" stroke="#e07a50"/></svg>
<svg style="left:431px;top:1036px" width="32" height="32"><circle cx="16" cy="16" r="15" fill="#4fbf3a"/><circle cx="16" cy="16" r="11" fill="#8ee06a"/><path d="M7 16 H24 C24 10 20 7 16 7 C11 7 8 11 8 16 C8 22 12 25 17 25 C20 25 22 24 24 22" fill="none" stroke="#fff" stroke-width="3"/><path d="M2 24 C8 30 26 30 31 20" fill="none" stroke="#2f8e22" stroke-width="2"/></svg>
<div class="a" style="left:212px;top:1077px;width:56px;height:3px;background:#76b9ed"></div>
<div class="a" style="left:281px;top:1077px;width:56px;height:3px;background:#76b9ed"></div>
<div class="a" style="left:350px;top:1077px;width:56px;height:3px;background:#76b9ed"></div>
<div class="a" style="left:419px;top:1077px;width:56px;height:3px;background:#76b9ed"></div>
<!-- tray -->
<svg style="left:1500px;top:1040px" width="24" height="24"><circle cx="11" cy="7" r="5" fill="#b07a5a"/><path d="M2 22C2 14 20 14 20 22Z" fill="#3a8e6a"/><circle cx="18" cy="16" r="5" fill="#e0e0e0"/></svg>
<svg style="left:1533px;top:1040px" width="24" height="24"><path d="M3 16 C1 8 8 2 15 3 L23 2 C22 6 20 7 18 8 C22 12 20 20 13 22 C8 23 4 21 3 16Z" fill="#2fa6dc"/><path d="M10 7L21 4L18 10Z" fill="#e9446a"/></svg>
<svg style="left:1567px;top:1040px" width="24" height="24"><path d="M12 2 C4 6 2 14 6 20 C10 24 18 22 21 17 C23 12 19 7 13 8 C9 9 8 14 11 16 C14 17 16 14 14 12" fill="none" stroke="#76b900" stroke-width="2.2"/></svg>
<svg style="left:1600px;top:1040px" width="24" height="24"><g fill="#f28aa0"><circle cx="12" cy="5" r="5"/><circle cx="19" cy="10" r="5"/><circle cx="16" cy="18" r="5"/><circle cx="8" cy="18" r="5"/><circle cx="5" cy="10" r="5"/></g><circle cx="12" cy="12" r="4" fill="#fff"/></svg>
<svg style="left:1634px;top:1040px" width="24" height="24"><path d="M12 1 L22 4 V12 C22 18 17 22 12 23 C7 22 2 18 2 12 V4Z" fill="#1e6ee0"/><path d="M6 9 L12 16 L18 9" fill="none" stroke="#fff" stroke-width="2.4"/></svg>
<svg style="left:1668px;top:1038px" width="22" height="28"><rect x="2" y="1" width="18" height="26" rx="9" fill="#1d7ce8"/><path d="M7 8 L15 18 L11 22 V6 L15 10 L7 19" fill="none" stroke="#fff" stroke-width="1.6"/></svg>
<svg style="left:1702px;top:1038px" width="20" height="28"><rect x="6" y="1" width="8" height="16" rx="4" fill="#fff"/><path d="M3 12C3 22 17 22 17 12M10 20V26M5 26H15" fill="none" stroke="#fff" stroke-width="2"/></svg>
<svg style="left:1735px;top:1040px" width="28" height="24"><path d="M3 2V8M8 2V8M1 8H10V12C10 15 3 15 3 12Z" fill="none" stroke="#fff" stroke-width="1.8"/><rect x="8" y="8" width="17" height="12" fill="none" stroke="#fff" stroke-width="2"/><rect x="25" y="11" width="2" height="6" fill="#fff"/></svg>
<svg style="left:1770px;top:1040px" width="26" height="24"><path d="M2 22 C2 12 12 2 24 2M6 22 C6 15 14 7 24 7M11 22 C11 17 17 12 24 12" fill="none" stroke="#fff" stroke-width="1.8"/><circle cx="22" cy="20" r="2" fill="#fff"/></svg>
<svg style="left:1802px;top:1040px" width="26" height="24"><path d="M2 8H7L14 2V22L7 16H2Z" fill="none" stroke="#fff" stroke-width="1.8"/><path d="M17 8C19 10 19 14 17 16M20 5C24 9 24 15 20 19" fill="none" stroke="#fff" stroke-width="1.8"/></svg>
<div class="t" style="left:1837px;top:1041px;font-size:21px;color:#fff">中</div>
<div class="a" style="left:1875px;top:1038px;width:26px;height:28px;background:#fff"></div>
<div class="t" style="left:1877px;top:1041px;font-size:22px;color:#111;font-weight:bold">五</div>
<div class="a" style="left:1913px;top:1025px;width:1px;height:55px;background:#6a6a6c"></div>

</body></html>
